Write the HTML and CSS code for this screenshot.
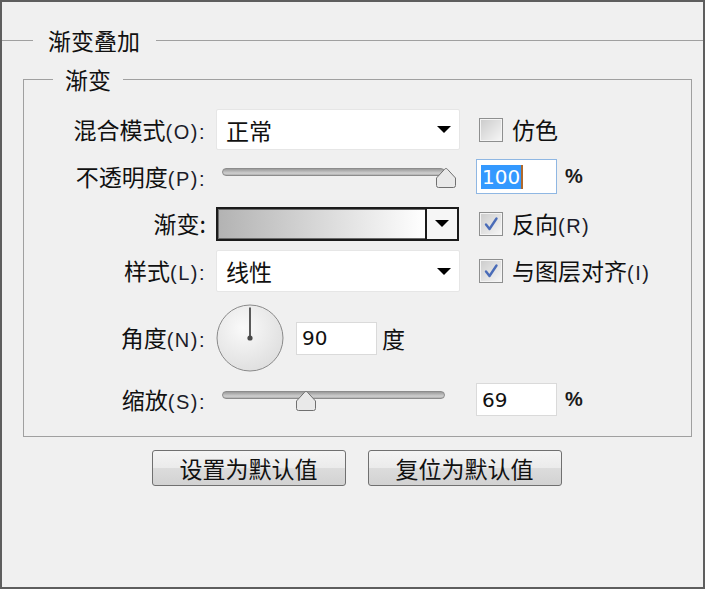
FILE: index.html
```html
<!DOCTYPE html>
<html lang="zh-CN">
<head>
<meta charset="UTF-8">
<meta name="viewport" content="width=device-width, initial-scale=1.0">
<title>渐变叠加</title>
<link rel="stylesheet" href="styles.css">
</head>
<body>
<div class="panel">
    <div class="group-title">
        <span class="rule rule-short"></span>
        <span class="title">渐变叠加</span>
        <span class="rule"></span>
    </div>

    <fieldset class="group">
        <legend>渐变</legend>
        <div class="form">
            <!-- 混合模式 -->
            <label class="lbl">混合模式<span class="key">(O):</span></label>
            <div class="select"><span>正常</span><span class="caret"></span></div>
            <label class="check"><span class="box"></span><span>仿色</span></label>

            <!-- 不透明度 -->
            <label class="lbl">不透明度<span class="key">(P):</span></label>
            <div class="slider">
                <div class="track"></div>
                <span class="thumb" style="left: 213px">
                    <svg width="22" height="22" viewBox="0 0 22 22"><path d="M11 1.5 Q11.8 1.5 12.5 2.3 L20.5 11 V18.5 Q20.5 20.5 18.5 20.5 H3.5 Q1.5 20.5 1.5 18.5 V11 L9.5 2.3 Q10.2 1.5 11 1.5 Z" fill="#e9e9e9" stroke="#707070"/></svg>
                </span>
            </div>
            <div class="num">
                <span class="field focus"><span class="sel">100</span><span class="cursor"></span></span>
                <span class="pct">%</span>
            </div>

            <!-- 渐变 -->
            <label class="lbl">渐变:</label>
            <div class="grad">
                <div class="grad-fill"></div>
                <div class="grad-btn"><span class="caret"></span></div>
            </div>
            <label class="check"><span class="box"><svg width="22" height="22" viewBox="0 0 22 22"><path d="M6 11.5 L9.5 16 L16.5 5.5" fill="none" stroke="#4a6cb8" stroke-width="2.4" stroke-linecap="round" stroke-linejoin="round"/></svg></span><span>反向<span class="key">(R)</span></span></label>

            <!-- 样式 -->
            <label class="lbl">样式<span class="key">(L):</span></label>
            <div class="select tall"><span>线性</span><span class="caret"></span></div>
            <label class="check"><span class="box"><svg width="22" height="22" viewBox="0 0 22 22"><path d="M6 11.5 L9.5 16 L16.5 5.5" fill="none" stroke="#4a6cb8" stroke-width="2.4" stroke-linecap="round" stroke-linejoin="round"/></svg></span><span>与图层对齐<span class="key">(I)</span></span></label>

            <!-- 角度 -->
            <label class="lbl">角度<span class="key">(N):</span></label>
            <div class="angle">
                <svg class="dial" width="68" height="68" viewBox="0 0 68 68">
                    <defs>
                        <radialGradient id="dialFill" cx="0.4" cy="0.35" r="0.7">
                            <stop offset="0" stop-color="#fafafa"/>
                            <stop offset="1" stop-color="#dedede"/>
                        </radialGradient>
                    </defs>
                    <circle cx="34" cy="34" r="33" fill="url(#dialFill)" stroke="#8a8a8a"/>
                    <line x1="34" y1="3.5" x2="34" y2="34" stroke="#5a5a5a" stroke-width="2"/>
                    <circle cx="34" cy="34" r="2.6" fill="#4a4a4a"/>
                </svg>
                <span class="field"><span>90</span></span>
                <span class="unit">度</span>
            </div>

            <!-- 缩放 -->
            <label class="lbl">缩放<span class="key">(S):</span></label>
            <div class="slider">
                <div class="track"></div>
                <span class="thumb" style="left: 73px">
                    <svg width="22" height="22" viewBox="0 0 22 22"><path d="M11 1.5 Q11.8 1.5 12.5 2.3 L20.5 11 V18.5 Q20.5 20.5 18.5 20.5 H3.5 Q1.5 20.5 1.5 18.5 V11 L9.5 2.3 Q10.2 1.5 11 1.5 Z" fill="#e9e9e9" stroke="#707070"/></svg>
                </span>
            </div>
            <div class="num">
                <span class="field short"><span>69</span></span>
                <span class="pct">%</span>
            </div>
        </div>
    </fieldset>

    <div class="buttons">
        <button type="button">设置为默认值</button>
        <button type="button">复位为默认值</button>
    </div>
</div>
</body>
</html>
```

FILE: styles.css
```css
body {
    margin: 0;
    background-color: #f0f0f0;
    font-family: "Noto Sans CJK SC", "Noto Sans", sans-serif;
    color: #111;
}
.panel {
    width: 705px;
    height: 589px;
    box-sizing: border-box;
    border: 2px solid #5e5e5e;
    padding-top: 23px;
    background-color: #f0f0f0;
}
.group-title {
    display: flex;
    align-items: center;
    height: 30px;
}
.rule {
    flex: 1;
    border-top: 1px solid #a0a0a0;
}
.rule-short {
    flex: 0 0 31px;
}
.title {
    padding: 0 16px 0 15px;
    font-size: 23px;
    line-height: 1;
}
.group {
    margin: 12px 11px 0 21px;
    padding: 15px 0 18px 0;
    border: 1px solid #a0a0a0;
    min-width: 0;
}
.group legend {
    margin-left: 29px;
    padding: 0 12px;
    font-size: 23px;
    line-height: 24px;
}
.form {
    display: grid;
    grid-template-columns: 182px 244px 1fr;
    grid-template-rows: 47px 47px 47px 48px 86px 37px;
    column-gap: 10px;
    align-items: center;
}
.lbl {
    text-align: right;
    font-size: 23px;
    line-height: 1;
}
.key {
    font-family: "Liberation Sans", Arial, sans-serif;
    font-size: 20px;
    letter-spacing: 1.5px;
    color: #1c1c2a;
}
.select {
    height: 41px;
    box-sizing: border-box;
    display: flex;
    align-items: center;
    justify-content: space-between;
    padding: 0 8px 0 9px;
    background-color: #fff;
    border: 1px solid #e6e6e6;
    border-radius: 2px;
    font-size: 23px;
}
.select.tall {
    height: 42px;
}
.caret {
    width: 0;
    height: 0;
    border-left: 7px solid transparent;
    border-right: 7px solid transparent;
    border-top: 7px solid #000;
}
.check {
    display: flex;
    align-items: center;
    gap: 9px;
    margin-left: 9px;
    font-size: 23px;
    line-height: 1;
}
.box {
    width: 24px;
    height: 24px;
    box-sizing: border-box;
    border: 1px solid #8e8f8f;
    background: linear-gradient(135deg, #cbcbcb, #f7f7f7);
    box-shadow: inset 0 0 0 1px #f4f4f4;
    display: flex;
    align-items: center;
    justify-content: center;
}
.slider {
    position: relative;
    width: 235px;
    height: 24px;
    margin-left: 6px;
}
.track {
    width: 223px;
    height: 8px;
    margin-top: 3px;
    box-sizing: border-box;
    border: 1px solid #8c8c8c;
    border-radius: 4px;
    background: linear-gradient(#9a9a9a, #cfcfcf 70%, #b0b0b0);
}
.thumb {
    position: absolute;
    top: 2px;
    width: 22px;
    height: 22px;
}
.thumb svg {
    display: block;
}
.num {
    display: flex;
    align-items: center;
    gap: 8px;
    margin-left: 6px;
}
.field {
    width: 81px;
    height: 33px;
    box-sizing: border-box;
    display: flex;
    align-items: center;
    padding-left: 5px;
    background-color: #fff;
    border: 1px solid #dadada;
    font-family: "DejaVu Sans", sans-serif;
    font-size: 20px;
    color: #111;
}
.field.focus {
    height: 35px;
    padding-left: 4px;
    border-color: #8fb7e3;
}
.sel {
    background-color: #3399ff;
    color: #fff;
    line-height: 24px;
    padding: 0 1px;
}
.cursor {
    width: 2px;
    height: 24px;
    background-color: #b06a2c;
}
.pct {
    font-family: "Liberation Sans", Arial, sans-serif;
    font-size: 20px;
    font-weight: bold;
    color: #1a1a1a;
}
.grad {
    width: 243px;
    height: 34px;
    box-sizing: border-box;
    display: flex;
    border: 2px solid #1b1b1b;
    box-shadow: inset 0 0 0 1px #6a6a6a;
}
.grad-fill {
    flex: 1;
    margin: 1px 0 1px 1px;
    background: linear-gradient(to right, #b3b3b3, #ffffff);
}
.grad-btn {
    width: 30px;
    display: flex;
    align-items: center;
    justify-content: center;
    border-left: 2px solid #1b1b1b;
    background-color: #f6f6f6;
}
.angle {
    grid-column: 2 / 4;
    display: flex;
    align-items: center;
}
.dial {
    display: block;
}
.angle .field {
    margin-left: 12px;
}
.unit {
    margin-left: 5px;
    font-size: 23px;
    line-height: 1;
}
.buttons {
    display: flex;
    justify-content: center;
    gap: 22px;
    margin-top: 13px;
    padding-left: 8px;
}
button {
    width: 194px;
    height: 36px;
    border: 1px solid #707070;
    border-radius: 3px;
    background: linear-gradient(#f4f4f4, #ebebeb 50%, #dcdcdc 51%, #d2d2d2);
    font-family: "Noto Sans CJK SC", sans-serif;
    font-size: 23px;
    line-height: 1;
    color: #111;
    padding: 0;
}
```
